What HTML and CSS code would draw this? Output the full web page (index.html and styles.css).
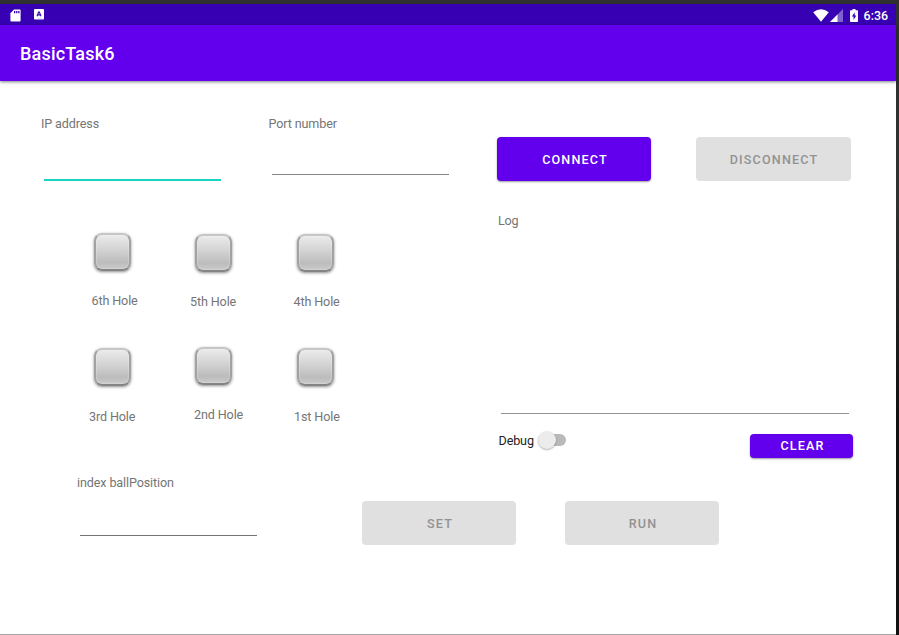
FILE: index.html
```html
<!DOCTYPE html>
<html lang="en">
<head>
<meta charset="utf-8">
<title>BasicTask6</title>
<link rel="stylesheet" href="styles.css">
</head>
<body>
<div class="device">
  <div class="status-bar">
    <svg class="icon-sd" width="11" height="13" viewBox="0 0 11 13"><path fill="#fff" d="M4 .5h5.600q1 0 1 1v10q0 1-1 1H1.400q-1 0-1-1V4.200z"/><path fill="#3700b3" d="M4 2h1.300v2.200H4zM6.100 2h1.300v2.200H6.100zM8.200 2h1.300v2.200H8.200z"/></svg>
    <svg class="icon-a" width="10" height="11" viewBox="0 0 10 11"><rect width="10" height="10.500" rx="1" fill="#fff"/><path d="M3 7.300 4.600 3h.8L7 7.300M3.700 5.900h2.600" fill="none" stroke="#3700b3" stroke-width="1.100"/><path d="M4.500 9.300h4" stroke="#b8a6e4" stroke-width=".6"/></svg>
    <div class="status-right">
      <svg class="icon-wifi" width="16" height="13" viewBox="0 0 16 13"><path fill="#fff" d="M.2 3.200Q8-2.600 15.800 3.200L8 12.800z"/></svg>
      <svg class="icon-cell" width="13" height="13" viewBox="0 0 13 13"><path fill="#8061d0" d="M13 0v13H0z"/><path fill="#fff" d="M7.500 5.500V13H0z"/></svg>
      <svg class="icon-battery" width="8" height="13" viewBox="0 0 8 13"><path fill="#fff" d="M2.500 0h3v1.300h1.700q.8 0 .8.800v10.100q0 .8-.8.800H.8q-.8 0-.8-.8V2.100q0-.8.8-.8h1.700z"/><path fill="#3700b3" d="M4.700 3.200 1.900 7.500h1.700v3.400l2.700-4.500H4.700z"/></svg>
      <span class="clock">6:36</span>
    </div>
  </div>
  <header class="app-bar">BasicTask6</header>
  <main class="content">
    <div class="upper">
      <section class="left">
        <div class="fields">
          <label class="field field-ip">IP address<span class="line line-active"></span></label>
          <label class="field field-port">Port number<span class="line"></span></label>
        </div>
        <div class="holes">
          <div class="hole hole-6"><i class="key"></i><span>6th Hole</span></div>
          <div class="hole hole-5"><i class="key"></i><span>5th Hole</span></div>
          <div class="hole hole-4"><i class="key"></i><span>4th Hole</span></div>
          <div class="hole hole-3"><i class="key"></i><span>3rd Hole</span></div>
          <div class="hole hole-2"><i class="key"></i><span>2nd Hole</span></div>
          <div class="hole hole-1"><i class="key"></i><span>1st Hole</span></div>
        </div>
      </section>
      <section class="right">
        <div class="actions">
          <button class="btn primary connect">CONNECT</button>
          <button class="btn disconnect" disabled>DISCONNECT</button>
        </div>
        <div class="log"><span>Log</span></div>
        <div class="log-tools">
          <span class="debug">Debug</span>
          <span class="switch"><span class="thumb"></span></span>
          <button class="btn primary clear">CLEAR</button>
        </div>
      </section>
    </div>
    <div class="lower">
      <label class="field field-index">index ballPosition<span class="line line-dark"></span></label>
      <button class="btn set" disabled>SET</button>
      <button class="btn run" disabled>RUN</button>
    </div>
  </main>
</div>
</body>
</html>
```

FILE: styles.css
```css
* { box-sizing: border-box; }

body {
  margin: 0;
  height: 635px;
  overflow: hidden;
  padding: 4px 3px 0 0;
  background: linear-gradient(#303030, #2f3030 200px, #111 420px, #111);
  font: 12.6px/16px Roboto, sans-serif;
  letter-spacing: -.13px;
  color: #757575;
}

.device {
  height: 631px;
  background: #fff;
  border-bottom: 1px solid #a5a5a5;
}

.status-bar {
  display: flex;
  height: 21px;
  padding: 5px 8px 0 10px;
  background: #3700b3;
}
.status-bar svg { display: block; flex: none; }
.icon-a { margin-left: 12.5px; }
.status-right { display: flex; margin-left: auto; }
.icon-cell { margin-left: 1px; }
.icon-battery { margin: 0 6px 0 7px; }
.icon-sd, .icon-wifi, .icon-cell, .icon-battery { margin-top: -.5px; }
.clock {
  color: #fff;
  font-size: 12.4px;
  font-weight: 500;
  line-height: 14px;
  letter-spacing: 0;
}

.app-bar {
  height: 56px;
  padding-left: 20px;
  background: #6200ee;
  box-shadow: 0 1px 3px rgba(0, 0, 0, .5);
  color: #fff;
  font-size: 18px;
  font-weight: 500;
  line-height: 58px;
  letter-spacing: .2px;
}

.upper { display: flex; height: 392px; }
.left { width: 497px; }
.fields { display: flex; height: 152px; padding: 35px 0 0 41px; }
.field { display: block; white-space: nowrap; }
.field-ip { width: 227.500px; }
.line {
  display: block;
  width: 177px;
  height: 1px;
  margin: 42px 0 0 3.500px;
  background: #858585;
}
.line-active { height: 2px; margin: 47px 0 0 3.4px; background: #18d5c1; }

.holes {
  display: grid;
  grid-template-columns: 101px 102px 110px;
  grid-template-rows: 114px 100px;
  padding-left: 94px;
}
.key {
  display: block;
  width: 37px;
  height: 37.5px;
  border: 2px solid;
  border-color: #c6c6c6 #a2a2a2 #848484;
  border-radius: 8px;
  background: linear-gradient(#ebebeb, #d2d2d2 45%, #bcbcbc 80%, #cacaca);
  box-shadow: 0 1px 3px rgba(0, 0, 0, .45), inset 0 0 1px 1px rgba(255, 255, 255, .2);
}
.hole span { display: block; margin: 22.5px 0 0 -2.500px; }
.hole-5, .hole-4 { padding-top: 1px; }
.hole-5 span { margin-left: -5px; }
.hole-4 span { margin-left: -3.5px; }
.hole-3, .hole-1 { padding-top: 1px; }
.hole-3 span { margin-left: -5px; margin-top: 23.5px; }
.hole-2 span { margin-left: -1px; }
.hole-1 span { margin-top: 23.5px; margin-left: -3px; }

.right { width: 358px; }
.actions { display: flex; height: 132px; padding-top: 56px; }
.btn {
  display: block;
  flex: none;
  width: 154px;
  height: 44px;
  padding: 1px 0 0 2px;
  border: 0;
  border-radius: 4px;
  background: #e0e0e0;
  color: #929292;
  font: 500 12.600px/16px Roboto, sans-serif;
  letter-spacing: 1.150px;
}
.primary {
  background: #6200ee;
  box-shadow: 0 1px 2px rgba(0, 0, 0, .4);
  color: #fff;
}
.disconnect { width: 155px; margin-left: 44.5px; }
.log {
  width: 348px;
  height: 201px;
  margin-left: 4.400px;
  border-bottom: 1px solid #929292;
}
.log span { margin-left: -3.5px; }
.log-tools { display: flex; padding-top: 19px; }
.debug { margin: 0 4px 0 1.500px; color: #222; }
.switch {
  display: flex;
  align-items: center;
  width: 28px;
  height: 12px;
  margin-top: 1px;
  border-radius: 6px;
  background: #b9b9b9;
}
.thumb {
  width: 18px;
  height: 18px;
  flex: none;
  border-radius: 50%;
  background: #ececec;
  box-shadow: 0 1px 2px rgba(0, 0, 0, .3);
}
.clear { width: 103px; height: 24px; margin: .5px 2px 0 auto; }

.lower { display: flex; align-items: flex-start; padding-left: 77px; }
.field-index { width: 285px; padding-top: 2px; }
.line-dark { margin-top: 44px; margin-left: 3.4px; background: #747474; }
.set, .run { margin-top: 28px; }
.run { margin-left: 49px; }
```
